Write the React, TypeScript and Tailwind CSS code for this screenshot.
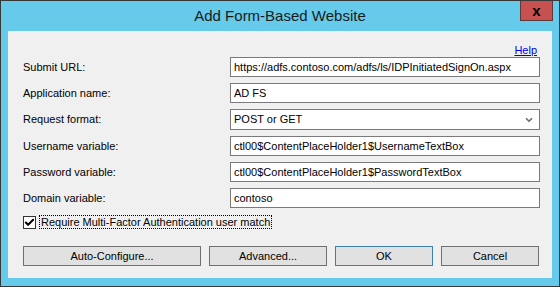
import { ChevronDown, Check } from "lucide-react";

const rows = [
  { label: "Submit URL:", value: "https://adfs.contoso.com/adfs/ls/IDPInitiatedSignOn.aspx" },
  { label: "Application name:", value: "AD FS" },
  { label: "Request format:", value: "POST or GET", select: true },
  { label: "Username variable:", value: "ctl00$ContentPlaceHolder1$UsernameTextBox" },
  { label: "Password variable:", value: "ctl00$ContentPlaceHolder1$PasswordTextBox" },
  { label: "Domain variable:", value: "contoso" },
];

const buttons = [
  { text: "Auto-Configure...", w: "w-[178px]" },
  { text: "Advanced...", w: "w-[118px]" },
  { text: "OK", w: "w-[98px]", def: true },
  { text: "Cancel", w: "w-[98px]" },
];

export default function App() {
  return (
    <div className="w-[560px] h-[287px] bg-[#383838] p-px font-['Liberation_Sans',Arial,sans-serif] text-[11px] text-black">
      <div className="flex h-full flex-col bg-[#66cbea]">
        {/* title bar */}
        <div className="relative flex h-[30px] items-center justify-center">
          <span className="text-[15px] text-[#1a1a1a]">Add Form-Based Website</span>
          <div className="absolute right-[6px] top-0 flex h-[20px] w-[33px] items-center justify-center border border-[#5b3a3a] border-t-0 bg-[#c75050]">
            <span className="text-[15px] font-bold leading-none text-black">x</span>
          </div>
        </div>

        <div className="mx-[7px] mb-[8px] flex flex-1 flex-col bg-[#f0f0f0] pl-[15px] pr-[11px] pt-[11px]">
          <div className="flex h-[14px] justify-end pr-[4px]">
            <span className="text-[#0000ee] underline">Help</span>
          </div>

          <div className="mt-[1px] flex flex-col gap-[6px]">
            {rows.map((r) => (
              <div key={r.label} className="flex items-center">
                <span className="w-[207px]">{r.label}</span>
                <div
                  className={`flex w-[310px] items-center justify-between border border-[#7a7a7a] bg-white pl-[3px] pr-[5px] ${
                    r.select ? "h-[21px]" : "h-[20px]"
                  }`}
                >
                  <span className="whitespace-nowrap">{r.value}</span>
                  {r.select && <ChevronDown className="h-[10px] w-[10px] text-[#6d6d6d]" strokeWidth={4} />}
                </div>
              </div>
            ))}
          </div>

          <div className="mt-[7px] flex h-[14px] items-center gap-[3px]">
            <div className="flex h-[13px] w-[13px] items-center justify-center border border-[#333333] bg-white">
              <Check className="h-[11px] w-[11px] text-black" strokeWidth={4.5} />
            </div>
            <span className="border border-dotted border-black px-[1px] leading-[12px]">
              Require Multi-Factor Authentication user match
            </span>
          </div>

          <div className="mt-[17px] flex gap-[8px]">
            {buttons.map((b) => (
              <div
                key={b.text}
                className={`flex h-[20px] items-center justify-center border bg-[#e1e1e1] ${b.w} ${
                  b.def ? "border-[#3c7fb1]" : "border-[#707070]"
                }`}
              >
                {b.text}
              </div>
            ))}
          </div>
        </div>
      </div>
    </div>
  );
}
